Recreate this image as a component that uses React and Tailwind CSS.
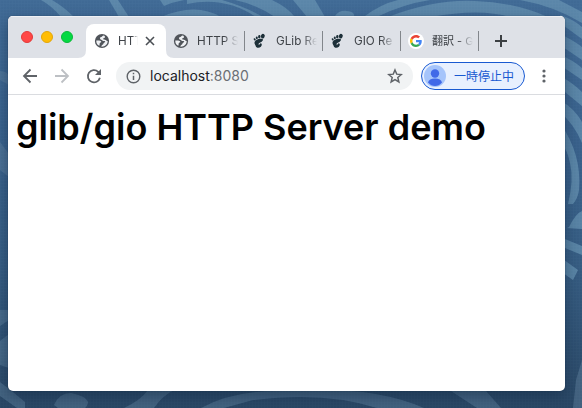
const GlobeIcon = () => (
  <svg className="size-4 shrink-0" viewBox="0 0 16 16">
    <circle cx="8" cy="8" r="7.1" fill="#50545a" />
    <path d="M9.7 2.5C8.2 2.5 8.3 3.8 7.2 4.1C6 4.4 5.7 5.2 6.2 6C6.7 6.8 7.8 6.6 8.1 7.3C8.5 8.2 9.6 8 10.5 8C11.5 8 11.4 9 10.5 9.4C9.3 9.8 9.6 11 8.8 11.6C8 12.1 7.5 12.7 7.4 13.7C10.8 14 13.7 11.4 13.7 8.1C12.8 8.2 12.5 7.2 11.6 6.9C10.8 6.6 9.6 6.8 9.2 6.1C8.8 5.3 10.2 5.2 10.9 4.6C11.5 4 10.7 2.8 9.7 2.5Z" fill="#eef0f3" />
    <path d="M2.3 7.4H5.2C6.3 7.4 7.4 8.2 7.3 9.1C7.2 9.8 6.1 9.5 5.8 10.1L5.4 12.8C3.2 11.8 2.1 9.8 2.3 7.4Z" fill="#eef0f3" />
  </svg>
);

const FootIcon = () => (
  <svg className="-ml-px size-4 shrink-0" viewBox="0 0 16 16">
    <g fill="#1d3039">
      <ellipse cx="11.8" cy="3.1" rx="1.9" ry="2.3" transform="rotate(25 11.8 3.1)" />
      <ellipse cx="8.3" cy="3.7" rx="1.2" ry="1.6" transform="rotate(10 8.3 3.7)" />
      <ellipse cx="5.8" cy="4.8" rx="1" ry="1.4" transform="rotate(-12 5.8 4.8)" />
      <ellipse cx="3.7" cy="6.4" rx=".95" ry="1.2" transform="rotate(-25 3.7 6.4)" />
      <path d="M11.5 6.1C8.6 4.7 3.7 7 3.5 9.5C3.3 11.1 4.5 11.9 4.7 13C5 15.1 8.3 15.4 9.9 13.7C11.3 12.3 11 10.5 9.9 10.3C8.9 10.2 8.8 11.7 8 11.7C7.2 11.6 7.4 10.6 8.4 10.1C10.4 9.2 13.1 7.3 11.5 6.1Z" />
    </g>
  </svg>
);

const GoogleIcon = () => (
  <svg className="size-4 shrink-0" viewBox="0 0 16 16">
    <circle cx="8" cy="8" r="8" fill="#fff" />
    <g transform="translate(2 2) scale(.25)">
      <path fill="#EA4335" d="M24 9.5c3.5 0 6.7 1.2 9.2 3.6l6.9-6.9C35.9 2.4 30.5 0 24 0 14.6 0 6.5 5.4 2.6 13.2l8 6.2C12.4 13.7 17.7 9.5 24 9.5z" />
      <path fill="#4285F4" d="M47 24.6c0-1.6-.2-3.1-.4-4.6H24v9h12.9c-.6 3-2.2 5.5-4.7 7.2l7.7 6C44.4 38 47 31.9 47 24.6z" />
      <path fill="#FBBC05" d="M10.5 28.6c-1-3-1-6.2 0-9.2l-7.9-6.2c-3.4 6.7-3.4 14.9 0 21.6z" />
      <path fill="#34A853" d="M24 48c6.5 0 11.9-2.1 15.9-5.8l-7.7-6c-6.4 4.4-17.8 3.1-21.7-7.6l-7.9 6.2C6.5 42.6 14.6 48 24 48z" />
    </g>
  </svg>
);

const Tab = ({ icon, title, small }) => (
  <div className="flex w-[71px] shrink-0 items-center">
    {icon}
    <span className={`${small ? "text-[11px]" : "text-[11.7px]"} ml-auto w-[41px] overflow-hidden whitespace-nowrap leading-4 text-[#3f4348] [mask-image:linear-gradient(to_right,black_65%,transparent_100%)]`}>
      {title}
    </span>
    <span className="w-1.5 shrink-0" />
  </div>
);

const Divider = () => <div className="mr-[7px] h-5 w-px shrink-0 bg-[#82868b]" />;

const Wallpaper = () => (
  <svg className="absolute inset-0 size-full" viewBox="0 0 582 408">
    <defs>
      <linearGradient id="sky" x2="0" y2="1">
        <stop stopColor="#406a95" />
        <stop offset=".35" stopColor="#39618b" />
        <stop offset=".65" stopColor="#365c82" />
        <stop offset="1" stopColor="#294664" />
      </linearGradient>
      <pattern id="weave" width="3" height="3" patternUnits="userSpaceOnUse">
        <path d="M0 .5H3M.5 0V3" stroke="#b3cada" strokeWidth=".5" opacity=".03" />
      </pattern>
    </defs>
    <rect width="582" height="408" fill="url(#sky)" />
    <g fill="#6490b0" opacity=".75">
      <path d="M41 0H52Q64 7 74 17H61Q52 6 41 0ZM109 0H118L129 17H119ZM160 0H184Q173 2 164 6ZM187 0H222Q246 7 263 17H256Q225-4 187 4Z" />
      <path d="M161 17Q196 2 221 17ZM235 0H272Q287 7 295 17H275Q255 4 235 0ZM293 0H315L325 17H307ZM335 16Q339 10 347 11T354 16ZM365 16Q381 4 398 0H430Q404 4 379 16Z" />
      <path d="M388 17Q435-1 475 1Q513 2 548 17H510Q480 8 431 17ZM520 0H559L582 12V23Q554 6 520 0Z" />
      <path d="M560 15Q573 19 582 27V39L560 23ZM560 34Q573 40 582 47V60L560 45ZM560 55Q573 60 582 68V80L560 65ZM560 76Q573 83 582 92V106L560 88ZM560 100Q575 109 582 122V143Q574 124 560 112ZM560 123Q582 154 579 190Q578 198 573 204H568Q574 180 570 163Q567 148 560 143Z" />
      <path d="M560 153Q567 167 564 190H560ZM569 227Q576 213 582 211V229L567 228ZM560 237 582 246V255L560 246ZM560 257 578 270 573 280 560 271Z" />
    </g>
    <g fill="#6386a2" opacity=".42">
      <path d="M0 71Q5 71 9 75V85L0 80ZM0 142 9 154V177L0 170ZM0 310H9V320L0 326ZM0 341 9 334V368L0 365ZM0 382Q12 391 25 402V408H17L0 396ZM54 405Q59 393 71 393Q86 396 88 402Q87 407 85 408H58Z" />
      <path d="M124 408Q141 400 148 390H174Q162 396 154 408ZM201 408Q232 391 277 391Q370 384 424 408H377Q325 391 253 400L224 408ZM451 391H486L501 408H477ZM576 380 582 360V408H573Z" />
    </g>
    <rect width="582" height="408" fill="url(#weave)" />
  </svg>
);

export default function App() {
  return (
    <main className="relative h-[408px] w-[582px] overflow-hidden px-2 pt-4 font-[Inter,'Noto_Sans_CJK_JP',sans-serif]">
      <Wallpaper />
      <section className="relative h-[375px] w-[557px] overflow-hidden rounded-[5px] bg-white shadow-[0_5px_14px_#10253f80,0_0_1px_#152b43]">
        <header className="flex h-[42px] items-center border-t border-[#eff1f5] bg-[#dee1e7] pt-[7px]">
          <div className="-mt-[9px] flex w-[78px] shrink-0 gap-2 pl-[13px]">
            <i className="size-3 rounded-full border border-[#e23a3b] bg-[#ff4746]" />
            <i className="size-3 rounded-full border border-[#e2a60b] bg-[#ffbd05]" />
            <i className="size-3 rounded-full border border-[#0bb939] bg-[#05d943]" />
          </div>
          <div className="relative flex h-[34px] w-20 shrink-0 items-center rounded-t-lg bg-white pl-2">
            <svg className="absolute -left-2 bottom-0 h-2 w-24" viewBox="0 0 96 8">
              <path d="M0 8Q8 8 8 0V8ZM88 0Q88 8 96 8H88Z" fill="#fff" />
            </svg>
            <GlobeIcon />
            <span className="ml-2 w-5 overflow-hidden whitespace-nowrap text-[11.7px] leading-4 text-[#3f4348] [mask-image:linear-gradient(to_right,black_70%,transparent_100%)]">HTT</span>
            <svg className="ml-[7px] size-[10px]" viewBox="0 0 10 10"><path d="m1 1 8 8m0-8-8 8" stroke="#4b4f54" strokeWidth="1.6" /></svg>
          </div>
          <div className="ml-[7px] flex items-center">
            <Tab icon={<GlobeIcon />} title="HTTP S" />
            <Divider />
            <div className="w-[70px]"><Tab icon={<FootIcon />} title="GLib Re" /></div>
            <Divider />
            <div className="w-[70px]"><Tab icon={<FootIcon />} title="GIO Re" /></div>
            <Divider />
            <div className="w-[70px]"><Tab icon={<GoogleIcon />} title="翻訳 - G" small /></div>
            <Divider />
          </div>
          <svg className="ml-[9px] size-3 shrink-0" viewBox="0 0 12 12"><path d="M6 0V12M0 6H12" stroke="#3c4043" strokeWidth="2" /></svg>
        </header>
        <nav className="flex h-[37px] items-center border-b border-[#dadce0] px-[14px]">
          <svg className="size-4 shrink-0" viewBox="0 0 16 16"><path d="M15 8H2m6.5-6.5L2 8l6.5 6.5" fill="none" stroke="#5f6368" strokeWidth="1.8" /></svg>
          <svg className="ml-4 size-4 shrink-0" viewBox="0 0 16 16"><path d="M1 8h13M7.5 1.5 14 8l-6.5 6.5" fill="none" stroke="#bdc0c4" strokeWidth="1.8" /></svg>
          <svg className="ml-4 size-4 shrink-0" viewBox="0 0 16 16"><path d="M13.9 9.7A6.1 6.1 0 1 1 12.2 3.8L14 5.6" fill="none" stroke="#5f6368" strokeWidth="1.8" /><path d="M15 1V7H9Z" fill="#5f6368" /></svg>
          <div className="ml-[14px] flex h-7 w-[297px] shrink-0 items-center rounded-full bg-[#f1f3f4] px-[10px]">
            <svg className="size-[15px] shrink-0" viewBox="0 0 15 15"><circle cx="7.5" cy="7.5" r="6.3" fill="none" stroke="#5f6368" strokeWidth="1.4" /><path d="M7.5 6.7V11M7.5 3.7V5.2" stroke="#5f6368" strokeWidth="1.5" /></svg>
            <span className="ml-[9px] text-[14px] leading-5 text-[#202124]">localhost<span className="text-[#6b6f74]">:8080</span></span>
            <svg className="ml-auto size-4" viewBox="0 0 24 24"><path d="m12 3 2.6 6.2 6.8.6-5.2 4.5 1.6 6.6-5.8-3.5-5.8 3.5 1.6-6.6-5.2-4.5 6.8-.6Z" fill="none" stroke="#5f6368" strokeWidth="2.2" /></svg>
          </div>
          <button className="ml-2 flex h-7 w-[104px] shrink-0 items-center rounded-full border border-[#1859d1] bg-[#e8f0fe] pl-[2px] text-[12px] text-[#1859d1]">
            <svg className="size-[22px]" viewBox="0 0 22 22"><circle cx="11" cy="11" r="11" fill="#a5c4fb" /><circle cx="11" cy="8.5" r="4.2" fill="#4169e8" /><path d="M4 17.5Q5 13.5 11 13.5T18 17.5Q15 21 11 21T4 17.5Z" fill="#4169e8" /></svg>
            <span className="ml-2 whitespace-nowrap pt-px">一時停止中</span>
          </button>
          <svg className="ml-4 h-4 w-1.5 shrink-0" viewBox="0 0 6 16" fill="#5f6368"><circle cx="3" cy="3" r="1.6" /><circle cx="3" cy="8" r="1.6" /><circle cx="3" cy="13" r="1.6" /></svg>
        </nav>
        <h1 className="ml-2 mt-2 w-fit whitespace-nowrap text-[36px] font-semibold leading-[48px] text-black">glib/gio HTTP Server demo</h1>
      </section>
    </main>
  );
}
